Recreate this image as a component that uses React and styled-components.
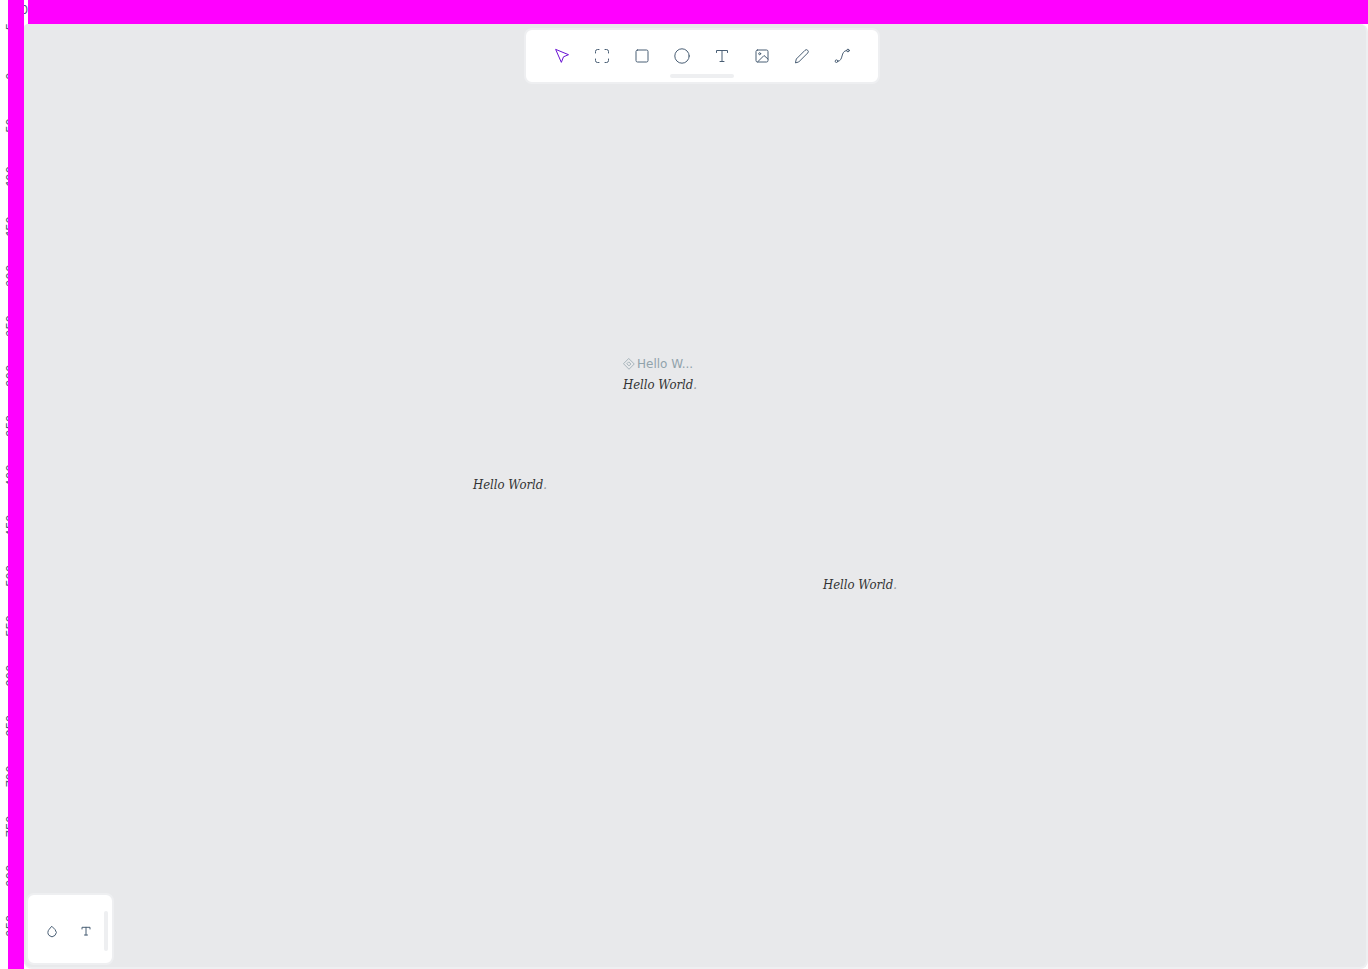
import React from 'react';
import styled, { createGlobalStyle } from 'styled-components';

const GlobalStyle = createGlobalStyle`
  *, *::before, *::after { box-sizing: border-box; }
  html, body, #root { height: 100%; margin: 0; }
  body { background: #ffffff; overflow: hidden; font-family: Inter, "Liberation Sans", sans-serif; }
`;

const Workspace = styled.div`
  height: 100%;
  display: grid;
  grid-template-columns: 24px minmax(0, 1fr);
  grid-template-rows: 24px minmax(0, 1fr);
`;

const Corner = styled.div`
  margin-left: 8px;
  background: #ff00ff;
`;

const TopRuler = styled.div`
  position: relative;
  overflow: hidden;
  font-size: 12px;
  line-height: 20px;
  color: #4a5f78;
`;

const TopLabel = styled.span`
  display: block;
  width: 4px;
  overflow: hidden;
  direction: rtl;
`;

const TopCover = styled.div`
  position: absolute;
  inset: 0 0 0 4px;
  background: #ff00ff;
`;

const SideRuler = styled.div`
  position: relative;
  overflow: hidden;
`;

const SideLabels = styled.div`
  display: flex;
  flex-direction: column;
  margin-top: -23px;
  padding-left: 3px;
`;

const SideLabel = styled.span`
  flex: none;
  height: 50px;
  width: 16px;
  display: flex;
  justify-content: center;
  writing-mode: vertical-rl;
  transform: rotate(180deg);
  font-size: 12px;
  line-height: 16px;
  color: #4a5f78;
`;

const SideCover = styled.div`
  position: absolute;
  inset: 0 0 0 8px;
  background: #ff00ff;
`;

const Stage = styled.main`
  min-width: 0;
  background: #ffffff;
`;

const Canvas = styled.div`
  position: relative;
  height: 100%;
  display: flex;
  flex-direction: column;
  justify-content: space-between;
  padding: 4px 0 2px 2px;
  background: #e8e9eb;
  border: solid #eeeff1;
  border-width: 0 2px 2px 0;
  border-radius: 4px 8px 8px 8px;
`;

const Toolbar = styled.div`
  align-self: center;
  margin-left: 12px;
  height: 56px;
  padding: 8px 18px 4px;
  display: flex;
  flex-direction: column;
  align-items: center;
  justify-content: space-between;
  background: #ffffff;
  border: 2px solid #eeeff1;
  border-radius: 8px;
`;

const Tools = styled.div`
  display: flex;
  gap: 4px;
`;

const ToolButton = styled.button`
  width: 36px;
  height: 36px;
  padding: 0;
  display: grid;
  place-items: center;
  border: 0;
  border-radius: 8px;
  background: transparent;
  color: ${(p) => (p.$active ? '#6911d4' : '#495e74')};
  cursor: pointer;
`;

const Handle = styled.div`
  flex: none;
  width: ${(p) => (p.$vertical ? '4px' : '64px')};
  height: ${(p) => (p.$vertical ? '40px' : '4px')};
  border-radius: 2px;
  background: #eeeff1;
`;

const Palette = styled.div`
  align-self: flex-start;
  width: 88px;
  height: 72px;
  padding: 4px 4px 0 8px;
  display: flex;
  align-items: center;
  justify-content: space-between;
  background: #ffffff;
  border: 2px solid #eeeff1;
  border-radius: 8px;
`;

const PaletteTools = styled.div`
  display: flex;
  gap: 2px;
`;

const PaletteButton = styled(ToolButton)`
  width: 32px;
  height: 32px;
`;

const Icon = styled.svg`
  display: block;
  width: ${(p) => (p.$small ? '12px' : '16px')};
  height: ${(p) => (p.$small ? '12px' : '16px')};
  fill: none;
  stroke: currentColor;
  stroke-width: 1;
  stroke-linecap: round;
  stroke-linejoin: round;
`;

const Shape = styled.div`
  position: absolute;
  left: ${(p) => p.$x}px;
  top: ${(p) => p.$y}px;
  display: flex;
  flex-direction: column;
`;

const ShapeTitle = styled.div`
  display: flex;
  align-items: center;
  gap: 2px;
  height: 20px;
  margin-top: -20px;
  font-family: "DejaVu Sans", sans-serif;
  font-size: 12px;
  line-height: 20px;
  white-space: nowrap;
  color: #91a3ab;
`;

const ShapeText = styled.p`
  margin: 0;
  font: italic 13px/22px "DejaVu Serif Condensed", "DejaVu Serif", serif;
  white-space: nowrap;
  color: #333333;
`;

const Stop = styled.span`
  color: #8f9295;
`;

const toolIcons = [
  { name: 'Move', active: true, body: <path d="M2 1.5 14.5 6.7 9.5 8.8 7.5 14Z" /> },
  { name: 'Board', body: <path d="M1.5 5V3.5a2 2 0 0 1 2-2H5M11 1.5h1.5a2 2 0 0 1 2 2V5M14.5 11v1.5a2 2 0 0 1-2 2H11M5 14.5H3.5a2 2 0 0 1-2-2V11" /> },
  { name: 'Rectangle', body: <rect x="2" y="2" width="12" height="12" rx="1.5" /> },
  { name: 'Ellipse', body: <circle cx="8" cy="8" r="7.2" /> },
  { name: 'Text', body: <path d="M2.5 4.5V2.5h11v2M8 2.5v11M6 13.5h4" /> },
  {
    name: 'Image',
    body: (
      <>
        <rect x="2" y="2" width="12" height="12" rx="1.5" />
        <circle cx="5.7" cy="5.7" r="1" />
        <path d="m3.5 14 6.5-6.5L14 11" />
      </>
    ),
  },
  { name: 'Curve', body: <path d="M1.5 14.5 2.3 11 11 2.3a1.9 1.9 0 0 1 2.7 2.7L5 13.7Z" /> },
  {
    name: 'Path',
    body: (
      <>
        <circle cx="2.5" cy="13.2" r="1.3" />
        <circle cx="14" cy="2.5" r="1.3" />
        <path d="M3.8 13.2C10 13 6 3 12.7 2.5" />
      </>
    ),
  },
];

const sideMarks = Array.from({ length: 19 }, (_, i) => i * 50 - 50);

const texts = [
  { x: 623, y: 374, title: 'Hello W...' },
  { x: 473, y: 474 },
  { x: 823, y: 574 },
];

export default function App() {
  return (
    <>
      <GlobalStyle />
      <Workspace>
        <Corner />
        <TopRuler>
          <TopLabel>0</TopLabel>
          <TopCover />
        </TopRuler>
        <SideRuler>
          <SideLabels>
            {sideMarks.map((mark) => (
              <SideLabel key={mark}>{mark}</SideLabel>
            ))}
          </SideLabels>
          <SideCover />
        </SideRuler>
        <Stage>
          <Canvas>
            <Toolbar role="toolbar" aria-label="Tools">
              <Tools>
                {toolIcons.map((tool) => (
                  <ToolButton key={tool.name} type="button" aria-label={tool.name} $active={tool.active}>
                    <Icon viewBox="0 0 16 16">{tool.body}</Icon>
                  </ToolButton>
                ))}
              </Tools>
              <Handle />
            </Toolbar>
            {texts.map((text) => (
              <Shape key={text.x} $x={text.x - 24} $y={text.y - 24}>
                {text.title && (
                  <ShapeTitle>
                    <Icon $small viewBox="0 0 16 16">
                      <path d="M8 1 15 8 8 15 1 8ZM8 5.5 10.5 8 8 10.5 5.5 8Z" />
                    </Icon>
                    {text.title}
                  </ShapeTitle>
                )}
                <ShapeText>
                  Hello World<Stop>.</Stop>
                </ShapeText>
              </Shape>
            ))}
            <Palette role="toolbar" aria-label="Palettes">
              <PaletteTools>
                <PaletteButton type="button" aria-label="Colors">
                  <Icon viewBox="0 0 16 16">
                    <path d="M8 3.5 11 6.5a4.2 4.2 0 1 1-6 0Z" />
                  </Icon>
                </PaletteButton>
                <PaletteButton type="button" aria-label="Typographies">
                  <Icon viewBox="0 0 16 16">
                    <path d="M4 6V4.300h8V6M8 4.300v7.700M6.500 12h3" />
                  </Icon>
                </PaletteButton>
              </PaletteTools>
              <Handle $vertical />
            </Palette>
          </Canvas>
        </Stage>
      </Workspace>
    </>
  );
}
